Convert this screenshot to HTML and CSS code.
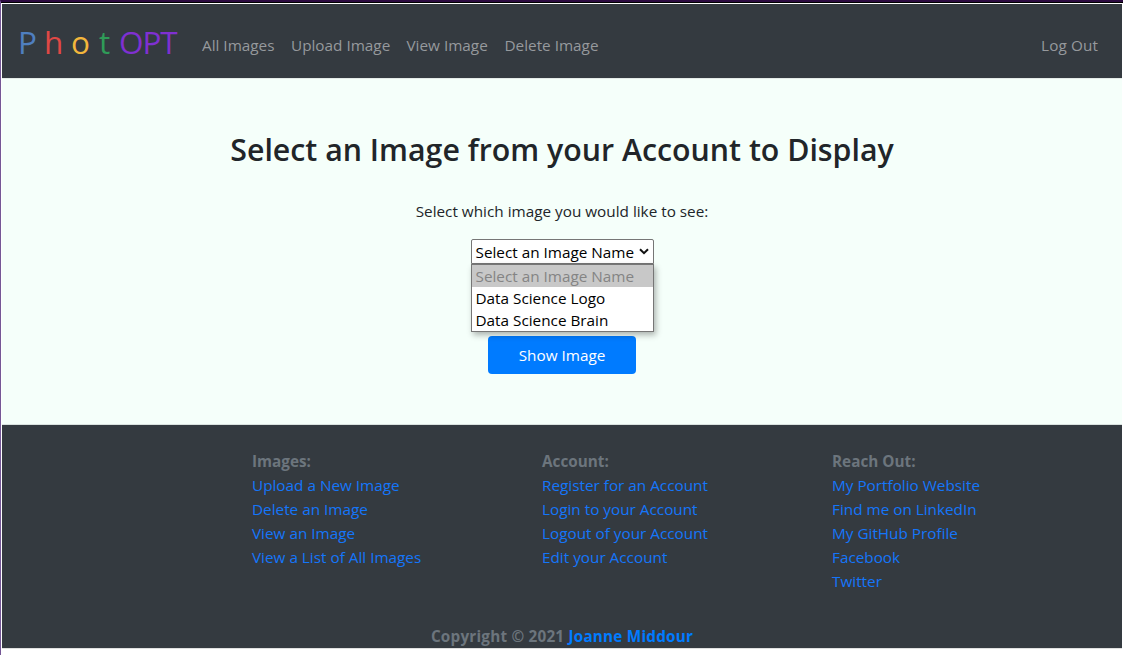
FILE: index.html
```html
<!DOCTYPE html>
<html lang="en">
<head>
<meta charset="utf-8">
<title>PhotOPT</title>
<link rel="stylesheet" href="styles.css">
</head>
<body>
<div class="window">
  <nav class="navbar">
    <a class="brand"><span class="b-p">P</span><span class="b-h">h</span><span class="b-o">o</span><span class="b-t">t</span><span class="b-opt">OPT</span></a>
    <a class="nav-link n1">All Images</a>
    <a class="nav-link n2">Upload Image</a>
    <a class="nav-link n3">View Image</a>
    <a class="nav-link n4">Delete Image</a>
    <a class="nav-link logout">Log Out</a>
  </nav>
  <main class="content">
    <h1 class="title">Select an Image from your Account to Display</h1>
    <p class="prompt">Select which image you would like to see:</p>
    <div class="picker">
      <div class="select"><span>Select an Image Name</span>
        <svg class="chevron" width="10" height="7" viewBox="0 0 10 7"><path d="M1 1.2 5 5.2 9 1.2" fill="none" stroke="#111" stroke-width="2"/></svg>
      </div>
      <ul class="options">
        <li class="option disabled">Select an Image Name</li>
        <li class="option">Data Science Logo</li>
        <li class="option">Data Science Brain</li>
      </ul>
    </div>
    <button class="submit">Show Image</button>
  </main>
  <footer class="footer">
    <div class="columns">
      <div class="column"><strong>Images:</strong><a>Upload a New Image</a><a>Delete an Image</a><a>View an Image</a><a>View a List of All Images</a></div>
      <div class="column"><strong>Account:</strong><a>Register for an Account</a><a>Login to your Account</a><a>Logout of your Account</a><a>Edit your Account</a></div>
      <div class="column"><strong>Reach Out:</strong><a>My Portfolio Website</a><a>Find me on LinkedIn</a><a>My GitHub Profile</a><a>Facebook</a><a>Twitter</a></div>
    </div>
    <p class="copyright">Copyright © 2021 <a>Joanne Middour</a></p>
  </footer>
</div>
</body>
</html>
```

FILE: styles.css
```css
* { box-sizing: border-box; }
body {
  margin: 0;
  height: 655px;
  overflow: hidden;
  background: #fff;
  font-family: "Open Sans", "Liberation Sans", sans-serif;
  font-size: 15.3px;
  line-height: 24px;
  color: #212529;
}
.window {
  height: 655px;
  border-top: 2px solid #2c0a40;
  border-left: 1px solid #755796;
  box-shadow: inset 0 1px #000;
  padding: 2px 1px 0 1px;
}
.navbar {
  display: flex;
  height: 74px;
  padding: 0 24px 0 16px;
  background: #343a40;
}
.brand {
  display: flex;
  width: 184px;
  padding-top: 14px;
  font-size: 31.5px;
  line-height: 48px;
}
.b-p { width: 26px; color: #4f7fc0; }
.b-h { width: 27px; color: #e04845; }
.b-o { width: 28px; color: #f3b63c; }
.b-t { width: 20px; color: #2f9b58; }
.b-opt { color: #7f30d2; letter-spacing: -1.1px; }
.nav-link { padding-top: 29px; margin-right: 16px; color: #96999d; white-space: nowrap; }
.n1 { width: 73px; }
.n2 { width: 99.5px; }
.n3 { width: 82px; }
.logout { margin: 0 0 0 auto; letter-spacing: .1px; }
.content {
  display: flex;
  flex-direction: column;
  align-items: center;
  height: 347px;
  padding-top: 52px;
  background: #f5fffa;
  border-top: 1px solid #e4eae8;
  border-bottom: 1px solid #d9e2df;
}
.title { margin: 0; font-size: 30.3px; font-weight: 600; line-height: 38px; white-space: nowrap; }
.prompt { margin: 30px 0 16px; }
.picker { position: relative; width: 183px; height: 25px; color: #000; white-space: nowrap; }
.select {
  display: flex;
  align-items: center;
  justify-content: space-between;
  height: 25px;
  padding: 1px 4px 0 4px;
  border: 1px solid #767676;
  border-radius: 2px 2px 0 0;
  background: #fff;
}
.chevron { margin-top: -2px; }
.options {
  position: absolute;
  top: 25px;
  left: 0;
  width: 183px;
  margin: 0;
  padding: 0;
  list-style: none;
  border: 1px solid #767676;
  background: #fff;
  box-shadow: 2px 3px 6px rgba(0, 0, 0, .3);
}
.option { height: 22px; padding-left: 4px; line-height: 23px; }
.disabled { background: #c8c8c8; color: #848484; }
.submit {
  width: 148px;
  height: 38px;
  margin-top: 72px;
  border: 0;
  border-radius: 4px;
  background: #007bff;
  color: #fff;
  font: inherit;
}
.footer { height: 224px; padding-top: 24px; background: #343a40; color: #6c757d; border-bottom: 1px solid #e0e0e0; }
.footer a { color: #1476fa; }
.columns { display: grid; grid-template-columns: repeat(3, 290px); height: 175px; padding-left: 250px; }
.column { display: flex; flex-direction: column; white-space: nowrap; }
.copyright { margin: 0; text-align: center; font-weight: 700; letter-spacing: .2px; }
.footer .copyright a { color: #007bff; }
```
